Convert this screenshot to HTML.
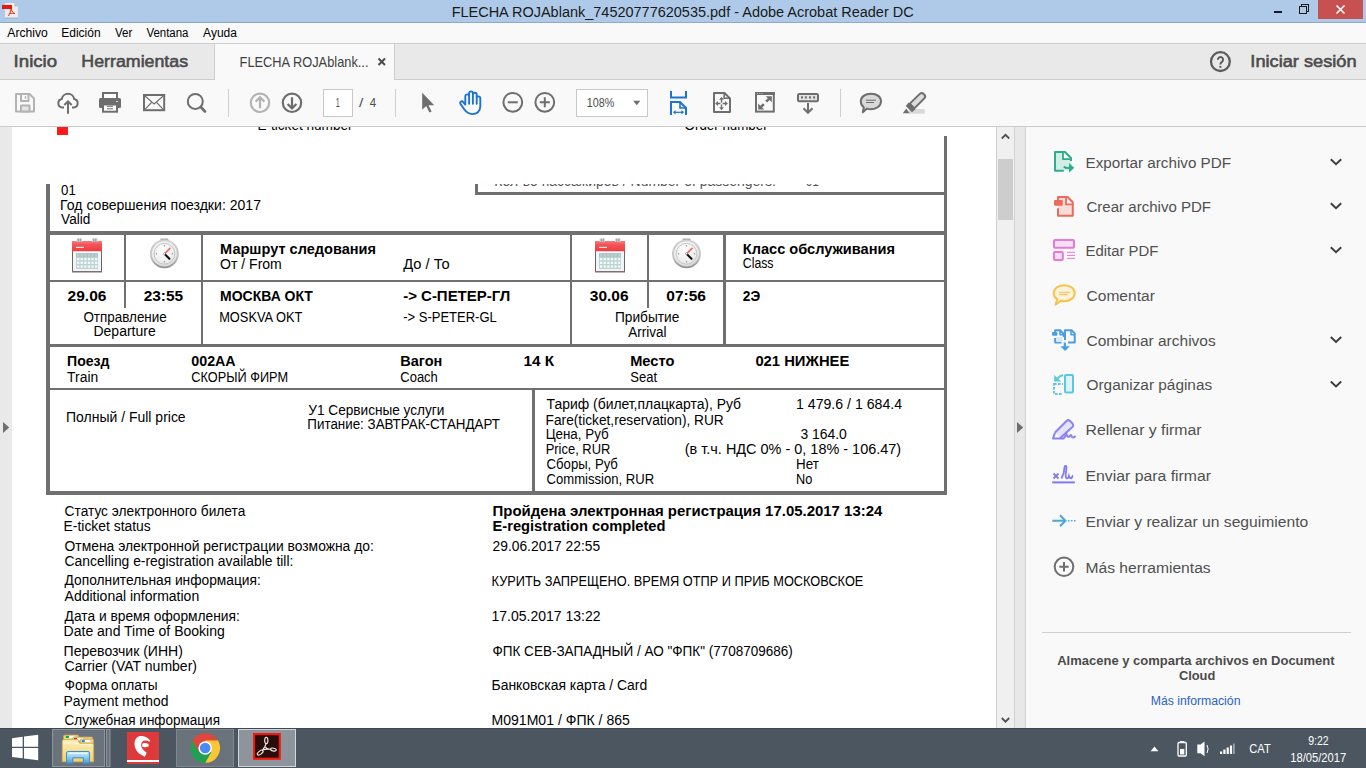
<!DOCTYPE html>
<html><head><meta charset="utf-8"><title>Acrobat Reader</title>
<style>
html,body{margin:0;padding:0;width:1366px;height:768px;overflow:hidden;background:#fff}
svg{display:block}
text{font-family:"Liberation Sans",sans-serif;white-space:pre}
</style></head><body>
<svg width="1366" height="768" viewBox="0 0 1366 768">
<defs><clipPath id="c0"><rect x="0" y="127" width="996" height="20"/></clipPath><clipPath id="c1"><rect x="480" y="184" width="400" height="8"/></clipPath></defs>
<rect x="0" y="0" width="1366" height="22" fill="#aecae8" shape-rendering="crispEdges"/>
<rect x="0" y="22" width="1366" height="1" fill="#8ea9c6" shape-rendering="crispEdges"/>
<rect x="0" y="23" width="1366" height="20" fill="#f9f9f9" shape-rendering="crispEdges"/>
<rect x="0" y="43" width="1366" height="1" fill="#cdcdcd" shape-rendering="crispEdges"/>
<rect x="0" y="44" width="1366" height="35" fill="#e9e9e9" shape-rendering="crispEdges"/>
<rect x="0" y="79" width="1366" height="1" fill="#cdcdcd" shape-rendering="crispEdges"/>
<rect x="215" y="44" width="179" height="36" fill="#f9f9f9" shape-rendering="crispEdges"/>
<rect x="214" y="44" width="1" height="35" fill="#cdcdcd" shape-rendering="crispEdges"/>
<rect x="394" y="44" width="1" height="35" fill="#cdcdcd" shape-rendering="crispEdges"/>
<rect x="0" y="80" width="1366" height="46" fill="#f9f9f9" shape-rendering="crispEdges"/>
<rect x="0" y="126" width="1366" height="1" fill="#cbcbcb" shape-rendering="crispEdges"/>
<rect x="0" y="127" width="996" height="601" fill="#ffffff" shape-rendering="crispEdges"/>
<rect x="0" y="127" width="12" height="601" fill="#e9e9e9" shape-rendering="crispEdges"/>
<rect x="996" y="127" width="1" height="601" fill="#cfcfcf" shape-rendering="crispEdges"/>
<rect x="997" y="127" width="17" height="601" fill="#f0f0f0" shape-rendering="crispEdges"/>
<rect x="998" y="159" width="15" height="61" fill="#cdcdcd" shape-rendering="crispEdges"/>
<rect x="1014" y="127" width="1" height="601" fill="#d2d2d2" shape-rendering="crispEdges"/>
<rect x="1015" y="127" width="10" height="601" fill="#e8e8e8" shape-rendering="crispEdges"/>
<rect x="1025" y="127" width="1" height="601" fill="#cfcfcf" shape-rendering="crispEdges"/>
<rect x="1026" y="127" width="340" height="601" fill="#f9f9f9" shape-rendering="crispEdges"/>
<rect x="1042" y="632" width="309" height="1" fill="#cfcfcf" shape-rendering="crispEdges"/>
<rect x="0" y="728" width="1366" height="40" fill="#4c5661" shape-rendering="crispEdges"/>
<rect x="0" y="728" width="1366" height="1" fill="#3f4852" shape-rendering="crispEdges"/>
<rect x="1318" y="0" width="45" height="19" fill="#c75050" shape-rendering="crispEdges"/>
<rect x="475" y="184" width="3" height="11" fill="#707070" shape-rendering="crispEdges"/>
<rect x="475" y="192" width="472" height="3" fill="#707070" shape-rendering="crispEdges"/>
<rect x="944" y="136" width="3" height="358" fill="#707070" shape-rendering="crispEdges"/>
<rect x="46" y="184" width="4" height="310" fill="#707070" shape-rendering="crispEdges"/>
<rect x="46" y="231" width="901" height="4" fill="#707070" shape-rendering="crispEdges"/>
<rect x="46" y="280" width="901" height="2" fill="#707070" shape-rendering="crispEdges"/>
<rect x="46" y="344" width="901" height="3" fill="#707070" shape-rendering="crispEdges"/>
<rect x="46" y="388" width="901" height="2" fill="#707070" shape-rendering="crispEdges"/>
<rect x="46" y="491" width="901" height="4" fill="#707070" shape-rendering="crispEdges"/>
<rect x="124" y="235" width="2" height="45" fill="#707070" shape-rendering="crispEdges"/>
<rect x="124" y="282" width="2" height="26" fill="#707070" shape-rendering="crispEdges"/>
<rect x="201" y="235" width="2" height="109" fill="#707070" shape-rendering="crispEdges"/>
<rect x="570" y="235" width="2" height="109" fill="#707070" shape-rendering="crispEdges"/>
<rect x="647" y="235" width="2" height="45" fill="#707070" shape-rendering="crispEdges"/>
<rect x="647" y="282" width="2" height="26" fill="#707070" shape-rendering="crispEdges"/>
<rect x="723" y="235" width="3" height="109" fill="#707070" shape-rendering="crispEdges"/>
<rect x="532" y="390" width="3" height="101" fill="#707070" shape-rendering="crispEdges"/>
<rect x="57" y="127" width="11" height="8" fill="#ff1a1a" shape-rendering="crispEdges"/>
<g><path d="M5,3 H14.5 L18,6.5 V18 H5 Z" fill="#ececec"/><path d="M14.5,3 L18,6.5 H14.5 Z" fill="#bdbdbd"/><rect x="5" y="17.6" width="13" height="1" fill="#9fb3c8"/><rect x="2" y="5" width="10" height="4" fill="#e8190c"/><path d="M8.5,16 C9.5,14 10.5,12 11,9 M11,9 C12,11.5 13,13 14.8,13.5 M9.5,13.8 C11,13.2 13,13 14.8,13.5" stroke="#e8190c" stroke-width="0.9" fill="none"/></g>
<rect x="1274" y="11" width="8" height="2" fill="#1a1a1a" shape-rendering="crispEdges"/>
<g fill="none" stroke="#1a1a1a" stroke-width="1.1" shape-rendering="crispEdges"><rect x="1299.5" y="6.5" width="7" height="7"/><path d="M1301.5,6.5 V4.5 H1308.5 V11.5 H1306.5"/></g>
<path d="M1336.5,5.5 L1344.5,13.5 M1344.5,5.5 L1336.5,13.5" stroke="#fff" stroke-width="1.6"/>
<path d="M378.5,58.5 L385,65 M385,58.5 L378.5,65" stroke="#4b4b4b" stroke-width="2"/>
<circle cx="1220.4" cy="61.6" r="9.4" fill="none" stroke="#5c5c5c" stroke-width="2.3"/>
<path d="M1217.9,59.8 A2.6,2.6 0 1 1 1221.9,61.9 C1220.8,62.6 1220.4,63.2 1220.4,64.6" fill="none" stroke="#5c5c5c" stroke-width="2"/>
<rect x="1219.4" y="65.9" width="2" height="1.9" fill="#5c5c5c"/>
<g fill="none" stroke="#b3b3b3" stroke-width="2" stroke-linejoin="round"><path d="M16,94 H29.5 L34,98.5 V111.6 H16 Z"/><rect x="21" y="94" width="7.5" height="7" /><rect x="21" y="105.5" width="8.5" height="6" fill="#e6e6e6"/></g><rect x="24.8" y="96" width="1.3" height="3" fill="#b3b3b3"/>
<g fill="none" stroke="#6e6e6e" stroke-width="2" stroke-linecap="butt"><path d="M64,107.5 H62.3 A4.3,4.3 0 0 1 61.8,99 A6.3,6.3 0 0 1 74.2,99 A4.3,4.3 0 0 1 73.7,107.5 H72"/><path d="M68,113.8 V101.5 M64.3,105 L68,101.3 L71.7,105" stroke-linejoin="miter"/></g>
<g><rect x="103" y="93" width="14" height="6" fill="#fff" stroke="#6e6e6e" stroke-width="2"/><rect x="99" y="98" width="22" height="10" rx="1.5" fill="#6e6e6e"/><rect x="116" y="101" width="2" height="1" fill="#ddd"/><rect x="103" y="104.5" width="14" height="7.2" fill="#fff" stroke="#6e6e6e" stroke-width="2"/><path d="M107,106.3 H113 M107,108.8 H113" stroke="#6e6e6e" stroke-width="1"/></g>
<g fill="none" stroke="#6e6e6e"><rect x="144" y="95" width="20.2" height="15.2" stroke-width="2"/><path d="M145,96 L154.1,104 L163.2,96 M145,109.3 L151.5,102.5 M163.2,109.3 L156.7,102.5" stroke-width="1.1"/></g>
<g fill="none" stroke="#6e6e6e"><circle cx="195.3" cy="101.4" r="7.5" stroke-width="2"/><path d="M200.8,107 L205,111.5" stroke-width="2.6" stroke-linecap="round"/></g>
<rect x="228" y="89" width="1" height="28" fill="#cfcfcf" shape-rendering="crispEdges"/>
<rect x="395" y="89" width="1" height="28" fill="#cfcfcf" shape-rendering="crispEdges"/>
<rect x="840" y="89" width="1" height="28" fill="#cfcfcf" shape-rendering="crispEdges"/>
<g fill="none" stroke-width="2.2"><circle cx="260" cy="102.8" r="9.2" stroke="#b3b3b3"/><path d="M260,108.3 V97.3 M255.6,101.6 L260,97.2 L264.4,101.6" stroke="#b3b3b3"/><circle cx="292" cy="102.8" r="9.2" stroke="#6e6e6e"/><path d="M292,97.3 V108.3 M287.6,104 L292,108.4 L296.4,104" stroke="#6e6e6e"/></g>
<rect x="323.5" y="89.5" width="29" height="27" fill="#fff" stroke="#c8c8c8" stroke-width="1"/>
<path d="M422.2,92.8 V109.8 L426.2,106 L429.4,112.5 L431.6,111.4 L428.5,105.2 L434.2,105.2 Z" fill="#6e6e6e"/>
<g fill="none" stroke="#1b73d3" stroke-width="1.9" stroke-linecap="round" stroke-linejoin="round"><path d="M465.3,104.5 V96.3 A1.9,1.9 0 0 1 469.1,96.3 V103.8 M469.1,95.8 V93.3 A1.9,1.9 0 0 1 472.9,93.3 V103.8 M472.9,95.5 V94.6 A1.9,1.9 0 0 1 476.7,94.6 V103.8 M476.7,98.2 A1.8,1.8 0 0 1 480.3,98.2 V106.5 C480.3,111.5 476.5,114.1 472.5,114.1 C468.5,114.1 466,112 463.8,108.8 L460.3,103.6 A1.7,1.7 0 0 1 462.6,101.4 L465.3,104.6"/></g>
<g fill="none" stroke="#6e6e6e" stroke-width="2"><circle cx="512.8" cy="102.3" r="9.4"/><path d="M507.8,102.3 H517.8"/><circle cx="544.8" cy="102.3" r="9.4"/><path d="M539.8,102.3 H549.8 M544.8,97.3 V107.3"/></g>
<rect x="576.5" y="89.5" width="71" height="27" fill="#fff" stroke="#c8c8c8" stroke-width="1"/>
<path d="M633.2,100.7 H640.3 L636.75,105.3 Z" fill="#6e6e6e"/>
<g fill="none" stroke="#1b73d3" stroke-width="2"><path d="M671,91 V97.5 H686 V91"/><path d="M671,115 V102 H680 L686,108 V115"/><path d="M680,102 V108 H686" stroke-width="1.6"/><path d="M674,112.3 H683" stroke-width="1.2"/></g><path d="M673,112.3 L675.5,110 V114.6Z M684,112.3 L681.5,110 V114.6Z" fill="#1b73d3"/>
<g fill="none" stroke="#6e6e6e"><path d="M714,112 V93 H724.5 L730,98.5 V112 Z" stroke-width="2" stroke-linejoin="round"/><path d="M724.2,93.5 V98.2 H729.5" stroke-width="1.6"/><path d="M721.5,99.4 V102.4 M721.5,104.6 V107.6 M717.8,103.5 H720.4 M722.6,103.5 H725.2" stroke-width="1.4"/></g><path d="M721.5,96.8 L719.1,99.7 H723.9Z M721.5,110.2 L719.1,107.3 H723.9Z M715.1,103.5 L718,101.1 V105.9Z M727.9,103.5 L725,101.1 V105.9Z" fill="#6e6e6e"/>
<g><rect x="756" y="93" width="17.8" height="18.6" fill="none" stroke="#6e6e6e" stroke-width="2"/><rect x="755" y="92" width="19.8" height="3" fill="#6e6e6e"/><rect x="757" y="93" width="1" height="1" fill="#bbb"/><rect x="759.2" y="93" width="1" height="1" fill="#bbb"/><rect x="761.4" y="93" width="1" height="1" fill="#bbb"/><path d="M765.8,96.2 H771.8 V102.2 L769.6,100 L767.1,102.5 L765.3,100.7 L767.8,98.2 Z M764.2,109.6 H758.2 V103.6 L760.4,105.8 L762.9,103.3 L764.7,105.1 L762.2,107.6 Z" fill="#6e6e6e"/></g>
<g><rect x="798" y="94" width="20" height="7.2" rx="1.2" fill="#e4e4e4" stroke="#6e6e6e" stroke-width="2"/><rect x="801" y="96.3" width="2" height="2.2" fill="#6e6e6e"/><rect x="804.9" y="96.3" width="2" height="2.2" fill="#6e6e6e"/><rect x="809" y="96.3" width="2" height="2.2" fill="#6e6e6e"/><rect x="813.1" y="96.3" width="2" height="2.2" fill="#6e6e6e"/><path d="M808,103 V113 M803.5,108.3 L808,112.8 L812.5,108.3" fill="none" stroke="#6e6e6e" stroke-width="2"/></g>
<g><path d="M871,93.7 C877,93.7 881,97 881,101.3 C881,106 876.5,109.3 871,109.3 C869.5,109.3 868,109 867,108.6 L862.8,112.2 L863.8,107.2 C861.5,105.6 860.8,103.5 860.8,101.5 C860.8,97 865,93.7 871,93.7 Z" fill="#d9d9d9" stroke="#6e6e6e" stroke-width="2" stroke-linejoin="round"/><path d="M866,100.2 H876 M866,102.5 H874" stroke="#6e6e6e" stroke-width="1"/></g>
<g><rect x="908.8" y="109.1" width="16" height="4.6" fill="#d9d9d9"/><path d="M909.8,103.6 L919.8,93.9 Q921.8,92.2 923.6,93.9 L924.4,94.7 Q926,96.6 924.3,98.4 L914.4,108.4 Z" fill="#dcdcdc" stroke="#6e6e6e" stroke-width="2" stroke-linejoin="round"/><path d="M908.6,102.6 L915.3,109.3 L912,112.3 L905.8,106.1 Z" fill="#6e6e6e"/><path d="M906.3,108.6 L902.8,113.3 H909.6 Z" fill="#6e6e6e"/></g>
<path d="M1001.8,138.5 L1005.5,134.8 L1009.2,138.5" fill="none" stroke="#505050" stroke-width="1.8"/>
<path d="M1001.8,718 L1005.5,721.7 L1009.2,718" fill="none" stroke="#505050" stroke-width="1.8"/>
<path d="M3,422 L9.2,427.5 L3,433 Z" fill="#6e6e6e"/>
<path d="M1017,422 L1023.2,427.5 L1017,433 Z" fill="#6e6e6e"/>
<g><path d="M1055,152 H1065 L1071,158 V170.7 H1055 Z" fill="#d4ece6"/><path d="M1063.8,170.7 H1055 V152 H1065 L1071,158 V161" fill="none" stroke="#2ead8c" stroke-width="2" stroke-linejoin="round"/><path d="M1063,152.5 V159.2 H1070.5" fill="#fff" stroke="#2ead8c" stroke-width="1.8"/><path d="M1063.8,166.5 Q1065.5,168.5 1069.5,168" fill="none" stroke="#2ead8c" stroke-width="2"/><path d="M1069,163 L1074.2,167.8 L1069,172.7Z" fill="#2ead8c"/></g>
<g><path d="M1058,197 H1067.6 L1073,202.5 V215.8 H1058 Z" fill="#f8dcd8"/><path d="M1058,200 V197 H1067.6 L1072.8,202.3 V215.8 H1058 V208.3" fill="none" stroke="#ec6a5c" stroke-width="2" stroke-linejoin="round"/><path d="M1066,197.5 V204.4 H1072.5" fill="#fff" stroke="#ec6a5c" stroke-width="1.8"/><rect x="1054" y="200" width="8.8" height="5.8" rx="1.2" fill="#ec6a5c"/></g>
<g stroke="#e877d9" fill="#f6e1f3"><rect x="1054" y="240" width="20" height="7.8" rx="1" stroke-width="2"/><rect x="1054" y="252.1" width="8.8" height="7.8" rx="1" stroke-width="2"/><path d="M1067,252.3 H1075 M1067,255.4 H1075 M1067,258.4 H1075" stroke-width="1"/></g>
<g><path d="M1064.2,285.2 C1070.5,285.2 1074.7,288.8 1074.7,293.2 C1074.7,297.7 1070.5,301.2 1064.2,301.2 C1063,301.2 1061.8,301 1060.8,300.7 L1055.5,304.7 L1057.3,299.3 C1055,297.8 1053.7,295.6 1053.7,293.2 C1053.7,288.8 1058,285.2 1064.2,285.2 Z" fill="#fbf1dc" stroke="#f6c34b" stroke-width="2" stroke-linejoin="round"/><path d="M1059,292.4 H1070 M1059,294.6 H1068" stroke="#f6c34b" stroke-width="1"/></g>
<g fill="none" stroke="#4a9de5" stroke-width="2" stroke-linejoin="round"><path d="M1055.2,332 V330.2 H1060 L1063.7,334 V337" /><path d="M1055.2,338 V342.6 H1061.5"/><path d="M1065,340 V330.2 H1071.5 L1074.7,333.5 V342.6 H1068"/><path d="M1060,330.5 V334.7 H1063.5 M1071,330.5 V334.7 H1074.5" stroke-width="1.6"/></g><rect x="1056.5" y="337" width="6" height="5" fill="#d9e8f6"/><rect x="1052" y="332.1" width="5.4" height="3.6" rx="1" fill="#4a9de5"/><path d="M1064.8,342.5 V347" stroke="#4a9de5" stroke-width="2.2"/><path d="M1060.3,346.3 H1069.9 L1065.1,351.1 Z" fill="#4a9de5"/>
<g><rect x="1065" y="375" width="8" height="17.6" rx="1" fill="#e0f3f8" stroke="#5ac8e0" stroke-width="2"/><path d="M1054,383 V394 H1063 M1054,384 H1063" fill="none" stroke="#5ac8e0" stroke-width="2" stroke-dasharray="2.6 1.4"/><path d="M1054.2,375 L1061.2,381.5 L1054.2,381.5 Z" fill="#5ac8e0"/><path d="M1057.5,378.5 Q1059.5,375.8 1063,375" fill="none" stroke="#5ac8e0" stroke-width="2"/></g>
<g><path d="M1055,432.5 L1066.5,421 A2.5,2.5 0 0 1 1070,421 L1072.4,423.4 A2.5,2.5 0 0 1 1072.4,427 L1060.3,438" fill="#e6e3fc" stroke="#8a82f4" stroke-width="2" stroke-linejoin="round"/><path d="M1055,432.5 L1053,438.5 H1063.5 C1065,437 1066,435.5 1066.5,434 C1067,436.5 1068.5,438 1070,436 C1070.5,434.5 1071,435 1072,437 C1073,438 1074.5,437.5 1075.5,435.8" fill="none" stroke="#8a82f4" stroke-width="2" stroke-linejoin="round"/></g>
<g fill="none" stroke="#7f79f3" stroke-width="1.8"><path d="M1053.5,473.5 L1058.5,478.5 M1058.5,473.5 L1053.5,478.5"/><path d="M1061.5,478.5 C1063,475.5 1064.5,470 1064.5,467.5 C1064.5,465.5 1066.5,465.5 1066.5,467.5 C1066.5,470 1065,475 1066,477.5 C1067,479 1068.5,478.5 1069,476 C1069.5,477.5 1070.5,479 1071.5,478 C1072.5,477 1072.5,476 1072,475.5"/><path d="M1052.2,482.4 H1074.8" stroke-width="2"/></g>
<g stroke="#4ba8d8" fill="none"><path d="M1052.3,520.8 H1065.5 M1060,515.3 L1065.5,520.8 L1060,526.3" stroke-width="2"/><path d="M1068,520.8 H1076.5" stroke-width="1.6" stroke-dasharray="1.5 1.5"/></g>
<g fill="none" stroke="#6e6e6e" stroke-width="2"><circle cx="1064" cy="566.8" r="9.3"/><path d="M1059.3,566.8 H1068.7 M1064,562.1 V571.5"/></g>
<path d="M1330.8,159.3 L1336,164.3 L1341.2,159.3" fill="none" stroke="#3c3c3c" stroke-width="1.9"/>
<path d="M1330.8,203.3 L1336,208.3 L1341.2,203.3" fill="none" stroke="#3c3c3c" stroke-width="1.9"/>
<path d="M1330.8,247.3 L1336,252.3 L1341.2,247.3" fill="none" stroke="#3c3c3c" stroke-width="1.9"/>
<path d="M1330.8,337 L1336,342 L1341.2,337" fill="none" stroke="#3c3c3c" stroke-width="1.9"/>
<path d="M1330.8,381.5 L1336,386.5 L1341.2,381.5" fill="none" stroke="#3c3c3c" stroke-width="1.9"/>
<defs><linearGradient id="calred" x1="0" y1="0" x2="0" y2="1"><stop offset="0" stop-color="#f77d80"/><stop offset="0.35" stop-color="#f25458"/><stop offset="1" stop-color="#ee3c40"/></linearGradient><linearGradient id="clkring" x1="0" y1="0" x2="0" y2="1"><stop offset="0" stop-color="#d0d0d0"/><stop offset="0.6" stop-color="#c4c4c4"/><stop offset="1" stop-color="#8d8d8d"/></linearGradient><radialGradient id="clkface" cx="0.45" cy="0.35" r="0.7"><stop offset="0" stop-color="#ffffff"/><stop offset="0.7" stop-color="#ececec"/><stop offset="1" stop-color="#d2d2d2"/></radialGradient></defs>
<g><rect x="72.5" y="241.5" width="29" height="30" fill="#eef7f7" stroke="#7a5f60" stroke-width="1"/><rect x="72" y="241" width="30" height="10.5" fill="url(#calred)"/><rect x="76" y="246.8" width="8" height="1.2" fill="#ffe0e0"/><rect x="73" y="251.5" width="28" height="1" fill="#ffffff"/><rect x="76" y="253.3" width="22" height="15.7" fill="#bcd3d3"/><rect x="76" y="253.3" width="22" height="3.8" fill="#a9c0c1"/><rect x="77.0" y="254.3" width="2.3" height="2.3" fill="#bfd3d4"/><rect x="80.6" y="254.3" width="2.3" height="2.3" fill="#bfd3d4"/><rect x="84.2" y="254.3" width="2.3" height="2.3" fill="#bfd3d4"/><rect x="87.8" y="254.3" width="2.3" height="2.3" fill="#bfd3d4"/><rect x="91.4" y="254.3" width="2.3" height="2.3" fill="#bfd3d4"/><rect x="95.0" y="254.3" width="2.3" height="2.3" fill="#bfd3d4"/><rect x="77.0" y="258.0" width="2.3" height="2.3" fill="#f4fafa"/><rect x="80.6" y="258.0" width="2.3" height="2.3" fill="#f4fafa"/><rect x="84.2" y="258.0" width="2.3" height="2.3" fill="#f4fafa"/><rect x="87.8" y="258.0" width="2.3" height="2.3" fill="#f4fafa"/><rect x="91.4" y="258.0" width="2.3" height="2.3" fill="#f4fafa"/><rect x="95.0" y="258.0" width="2.3" height="2.3" fill="#f4fafa"/><rect x="77.0" y="261.7" width="2.3" height="2.3" fill="#f4fafa"/><rect x="80.6" y="261.7" width="2.3" height="2.3" fill="#f4fafa"/><rect x="84.2" y="261.7" width="2.3" height="2.3" fill="#f4fafa"/><rect x="87.8" y="261.7" width="2.3" height="2.3" fill="#f4fafa"/><rect x="91.4" y="261.7" width="2.3" height="2.3" fill="#f4fafa"/><rect x="95.0" y="261.7" width="2.3" height="2.3" fill="#f4fafa"/><rect x="77.0" y="265.4" width="2.3" height="2.3" fill="#f4fafa"/><rect x="80.6" y="265.4" width="2.3" height="2.3" fill="#f4fafa"/><rect x="84.2" y="265.4" width="2.3" height="2.3" fill="#f4fafa"/><rect x="87.8" y="265.4" width="2.3" height="2.3" fill="#f4fafa"/><rect x="91.4" y="265.4" width="2.3" height="2.3" fill="#f4fafa"/><rect x="95.0" y="265.4" width="2.3" height="2.3" fill="#f4fafa"/><rect x="72" y="271" width="30" height="1.5" fill="#8a6a6a"/><rect x="76.5" y="238.5" width="5.5" height="3.5" fill="#d2d2d2"/><rect x="77.8" y="238.5" width="1" height="3.5" fill="#9a9a9a"/><rect x="79.8" y="238.5" width="1" height="3.5" fill="#9a9a9a"/><rect x="92" y="238.5" width="5.5" height="3.5" fill="#d2d2d2"/><rect x="93.3" y="238.5" width="1" height="3.5" fill="#9a9a9a"/><rect x="95.3" y="238.5" width="1" height="3.5" fill="#9a9a9a"/></g>
<g><rect x="160.4" y="238.60000000000002" width="8" height="2.6" rx="1" fill="#a9a9a9"/><circle cx="164.4" cy="253.8" r="14.4" fill="url(#clkring)"/><circle cx="164.4" cy="253.8" r="12.6" fill="url(#clkface)"/><circle cx="164.4" cy="253.8" r="10.4" fill="none" stroke="#c4c4c4" stroke-width="1"/><rect x="163.8" y="245.20000000000002" width="1.2" height="1.2" fill="#8c8c8c"/><rect x="171.8" y="253.20000000000002" width="1.2" height="1.2" fill="#8c8c8c"/><rect x="163.8" y="261.2" width="1.2" height="1.2" fill="#8c8c8c"/><rect x="155.8" y="253.20000000000002" width="1.2" height="1.2" fill="#8c8c8c"/><path d="M164.4,253.8 L169.9,248.3" stroke="#f06a6a" stroke-width="1.7" stroke-linecap="round"/><path d="M164.4,253.8 L169.4,258.8" stroke="#111" stroke-width="2.1" stroke-linecap="round"/><circle cx="164.4" cy="253.8" r="1" fill="#fff"/></g>
<g><rect x="595.5" y="241.5" width="29" height="30" fill="#eef7f7" stroke="#7a5f60" stroke-width="1"/><rect x="595" y="241" width="30" height="10.5" fill="url(#calred)"/><rect x="599" y="246.8" width="8" height="1.2" fill="#ffe0e0"/><rect x="596" y="251.5" width="28" height="1" fill="#ffffff"/><rect x="599" y="253.3" width="22" height="15.7" fill="#bcd3d3"/><rect x="599" y="253.3" width="22" height="3.8" fill="#a9c0c1"/><rect x="600.0" y="254.3" width="2.3" height="2.3" fill="#bfd3d4"/><rect x="603.6" y="254.3" width="2.3" height="2.3" fill="#bfd3d4"/><rect x="607.2" y="254.3" width="2.3" height="2.3" fill="#bfd3d4"/><rect x="610.8" y="254.3" width="2.3" height="2.3" fill="#bfd3d4"/><rect x="614.4" y="254.3" width="2.3" height="2.3" fill="#bfd3d4"/><rect x="618.0" y="254.3" width="2.3" height="2.3" fill="#bfd3d4"/><rect x="600.0" y="258.0" width="2.3" height="2.3" fill="#f4fafa"/><rect x="603.6" y="258.0" width="2.3" height="2.3" fill="#f4fafa"/><rect x="607.2" y="258.0" width="2.3" height="2.3" fill="#f4fafa"/><rect x="610.8" y="258.0" width="2.3" height="2.3" fill="#f4fafa"/><rect x="614.4" y="258.0" width="2.3" height="2.3" fill="#f4fafa"/><rect x="618.0" y="258.0" width="2.3" height="2.3" fill="#f4fafa"/><rect x="600.0" y="261.7" width="2.3" height="2.3" fill="#f4fafa"/><rect x="603.6" y="261.7" width="2.3" height="2.3" fill="#f4fafa"/><rect x="607.2" y="261.7" width="2.3" height="2.3" fill="#f4fafa"/><rect x="610.8" y="261.7" width="2.3" height="2.3" fill="#f4fafa"/><rect x="614.4" y="261.7" width="2.3" height="2.3" fill="#f4fafa"/><rect x="618.0" y="261.7" width="2.3" height="2.3" fill="#f4fafa"/><rect x="600.0" y="265.4" width="2.3" height="2.3" fill="#f4fafa"/><rect x="603.6" y="265.4" width="2.3" height="2.3" fill="#f4fafa"/><rect x="607.2" y="265.4" width="2.3" height="2.3" fill="#f4fafa"/><rect x="610.8" y="265.4" width="2.3" height="2.3" fill="#f4fafa"/><rect x="614.4" y="265.4" width="2.3" height="2.3" fill="#f4fafa"/><rect x="618.0" y="265.4" width="2.3" height="2.3" fill="#f4fafa"/><rect x="595" y="271" width="30" height="1.5" fill="#8a6a6a"/><rect x="599.5" y="238.5" width="5.5" height="3.5" fill="#d2d2d2"/><rect x="600.8" y="238.5" width="1" height="3.5" fill="#9a9a9a"/><rect x="602.8" y="238.5" width="1" height="3.5" fill="#9a9a9a"/><rect x="615" y="238.5" width="5.5" height="3.5" fill="#d2d2d2"/><rect x="616.3" y="238.5" width="1" height="3.5" fill="#9a9a9a"/><rect x="618.3" y="238.5" width="1" height="3.5" fill="#9a9a9a"/></g>
<g><rect x="682.5" y="238.60000000000002" width="8" height="2.6" rx="1" fill="#a9a9a9"/><circle cx="686.5" cy="253.8" r="14.4" fill="url(#clkring)"/><circle cx="686.5" cy="253.8" r="12.6" fill="url(#clkface)"/><circle cx="686.5" cy="253.8" r="10.4" fill="none" stroke="#c4c4c4" stroke-width="1"/><rect x="685.9" y="245.20000000000002" width="1.2" height="1.2" fill="#8c8c8c"/><rect x="693.9" y="253.20000000000002" width="1.2" height="1.2" fill="#8c8c8c"/><rect x="685.9" y="261.2" width="1.2" height="1.2" fill="#8c8c8c"/><rect x="677.9" y="253.20000000000002" width="1.2" height="1.2" fill="#8c8c8c"/><path d="M686.5,253.8 L692.0,248.3" stroke="#f06a6a" stroke-width="1.7" stroke-linecap="round"/><path d="M686.5,253.8 L691.5,258.8" stroke="#111" stroke-width="2.1" stroke-linecap="round"/><circle cx="686.5" cy="253.8" r="1" fill="#fff"/></g>
<path d="M12,738.3 L22.7,736.8 V746.7 H12 Z M24,736.6 L38.2,734.7 V746.7 H24 Z M12,748 H22.7 V758.2 L12,756.9 Z M24,748 H38.2 V760.3 L24,758.4 Z" fill="#ffffff"/>
<rect x="52.5" y="729.5" width="52" height="37" fill="#6a727b" stroke="#8e949b" stroke-width="1"/>
<rect x="106.5" y="729.5" width="3.5" height="37" fill="#6a727b" stroke="#8e949b" stroke-width="1"/>
<defs><linearGradient id="fold" x1="0" y1="0" x2="0" y2="1"><stop offset="0" stop-color="#fbf0bf"/><stop offset="1" stop-color="#f0d06a"/></linearGradient><linearGradient id="exb" x1="0" y1="0" x2="0" y2="1"><stop offset="0" stop-color="#d6f1fb"/><stop offset="0.5" stop-color="#8ccbef"/><stop offset="1" stop-color="#4b9bd8"/></linearGradient></defs>
<g><path d="M63.5,739.5 V736.5 Q63.5,735 65,735 H77.5 Q78.7,735 78.7,736.5 V739.5 Z" fill="#ecd48f" stroke="#caa54e" stroke-width="0.8"/><rect x="65.8" y="735.9" width="3.1" height="2.1" fill="#12b21f"/><rect x="69" y="735.9" width="6" height="2.1" fill="#fff"/><path d="M72.8,741.5 V738.3 Q72.8,737 74,737 H91.5 Q92.6,737 92.6,738.3 V741.5 Z" fill="#ecd48f" stroke="#caa54e" stroke-width="0.8"/><rect x="74" y="738" width="2.9" height="2" fill="#d6281c"/><rect x="77" y="738" width="6" height="2" fill="#fff"/><path d="M80.3,743.5 V740.3 Q80.3,739.1 81.5,739.1 H92.3 Q93.5,739.1 93.5,740.3 V743.5 Z" fill="#ecd48f" stroke="#caa54e" stroke-width="0.8"/><rect x="82" y="740.1" width="2.8" height="2" fill="#1789ea"/><rect x="84.9" y="740.1" width="5" height="2" fill="#fff"/><path d="M62.3,761.8 V741.5 Q62.3,739.6 64,739.6 H78 L79.5,743.2 H92 Q93.6,743.2 93.6,744.8 V761.8 Z" fill="url(#fold)" stroke="#d2b15a" stroke-width="0.9"/><path d="M63.6,743 H78.6 L80,744.8 H92.4" fill="none" stroke="#fff6d8" stroke-width="0.9"/><path d="M66.6,763.3 V753 Q66.6,751.5 68.2,751.5 H88 Q89.4,751.5 89.4,753 V763.3 H83.4 V757.8 H72.8 V763.3 Z" fill="url(#exb)" stroke="#3a8ccf" stroke-width="1"/><path d="M68.5,753.3 H87.5" stroke="#eefaff" stroke-width="0.9"/></g>
<g><rect x="127" y="732" width="32" height="32" fill="#de3a3c"/><rect x="127" y="760" width="32" height="2" fill="#fff"/><path d="M150.3,740.8 C147,736.5 141,734.5 137,737.5 C133,741 134,749 139,753.5 L144.6,756.7 C146,755 146.5,753.5 146.5,752.5 C142.5,750 140.5,746.5 141.3,743.5 C142,740 146.5,739.5 149.3,741.8 Z" fill="#fff"/><path d="M142.2,744 C143,742.8 146,742.8 148.6,744 V746.5 C146,747.5 143,747.5 142.2,746.5 Z" fill="#fff"/></g>
<rect x="176.5" y="729.5" width="57" height="37" fill="#6a727b" stroke="#7f868d" stroke-width="1"/>
<g><path d="M205.2,748 L192.38,740.6 A14.8,14.8 0 0 1 218.02,740.6 Z" fill="#e0463b"/><path d="M205.2,748 L218.02,740.6 A14.8,14.8 0 0 1 205.2,762.8 Z" fill="#fbc735"/><path d="M205.2,748 L205.2,762.8 A14.8,14.8 0 0 1 192.38,740.6 Z" fill="#22a052"/><path d="M205.2,740.6 H218.02 L211.6,751.7 Z" fill="#fbc735"/><path d="M211.6,751.7 L205.2,762.8 L198.8,751.7 Z" fill="#22a052"/><path d="M198.8,751.7 L192.38,740.6 L205.2,740.6 Z" fill="#e0463b"/><circle cx="205.2" cy="748" r="6.8" fill="#fff"/><circle cx="205.2" cy="748" r="5.3" fill="#4a8af4"/></g>
<rect x="238.5" y="729.5" width="57" height="37" fill="#8e949b" stroke="#d3d6d9" stroke-width="1"/>
<g><rect x="253" y="733" width="27.8" height="26.8" fill="#f0190b"/><rect x="255.1" y="735.2" width="23.6" height="22.4" fill="#2a0c0b"/><g fill="none" stroke="#f4f0f0" stroke-width="1.1"><ellipse cx="266.3" cy="740.4" rx="1.6" ry="3.1"/><ellipse cx="273.4" cy="749.6" rx="2.9" ry="1.4" transform="rotate(12 273.4 749.6)"/><ellipse cx="260.2" cy="752.6" rx="3.4" ry="1.6" transform="rotate(-38 260.2 752.6)"/><path d="M266.3,743.5 L264.8,746.6 L262.4,750.6 M264.8,746.6 L267.6,748.9 L270.6,749.2 M263.6,749.6 L267.6,748.9"/></g></g>
<path d="M1150.6,751.2 L1154.45,746.5 L1158.3,751.2 Z" fill="#fff"/>
<g><rect x="1178" y="742.5" width="8.3" height="13.5" rx="1" fill="none" stroke="#fff" stroke-width="1.3"/><rect x="1180" y="741" width="4.3" height="1.5" fill="#fff"/><rect x="1180" y="749" width="4.3" height="5.5" fill="#fff"/></g>
<g><path d="M1197.3,744.5 H1200.5 L1204.5,741.5 V756.3 L1200.5,753.2 H1197.3 Z" fill="#fff"/><path d="M1207,745 Q1209.2,749 1207,753" fill="none" stroke="#fff" stroke-width="1"/></g>
<g fill="#fff"><rect x="1220" y="751.5" width="2.2" height="2.5"/><rect x="1223.3" y="749.5" width="2.2" height="4.5"/><rect x="1226.6" y="747.5" width="2.2" height="6.5"/><rect x="1229.9" y="745.5" width="2.2" height="8.5"/><rect x="1233" y="743.5" width="1.8" height="10.5" fill="#9aa0a6"/></g>
<text x="451.67" y="16.80" font-size="15.5" fill="#1a1a1a" textLength="462.01" lengthAdjust="spacingAndGlyphs">FLECHA ROJAblank_74520777620535.pdf - Adobe Acrobat Reader DC</text>
<text x="7.30" y="36.60" font-size="12.5" textLength="40.55" lengthAdjust="spacingAndGlyphs">Archivo</text>
<text x="61.24" y="36.60" font-size="12.5" textLength="39.42" lengthAdjust="spacingAndGlyphs">Edición</text>
<text x="114.90" y="36.60" font-size="12.5" textLength="17.35" lengthAdjust="spacingAndGlyphs">Ver</text>
<text x="146.40" y="36.60" font-size="12.5" textLength="42.06" lengthAdjust="spacingAndGlyphs">Ventana</text>
<text x="203.10" y="36.60" font-size="12.5" textLength="33.85" lengthAdjust="spacingAndGlyphs">Ayuda</text>
<text x="13.64" y="67.00" font-size="16" fill="#4b4b4b" stroke="#4b4b4b" stroke-width="0.55" textLength="43.45" lengthAdjust="spacingAndGlyphs">Inicio</text>
<text x="81.39" y="67.00" font-size="16" fill="#4b4b4b" stroke="#4b4b4b" stroke-width="0.55" textLength="106.71" lengthAdjust="spacingAndGlyphs">Herramientas</text>
<text x="239.61" y="67.00" font-size="14.3" fill="#404040" textLength="128.86" lengthAdjust="spacingAndGlyphs">FLECHA ROJAblank...</text>
<text x="1250.36" y="67.00" font-size="16" fill="#4b4b4b" stroke="#4b4b4b" stroke-width="0.55" textLength="106.26" lengthAdjust="spacingAndGlyphs">Iniciar sesión</text>
<text x="335.80" y="107.10" font-size="12.5" fill="#4b4b4b" textLength="3.97" lengthAdjust="spacingAndGlyphs">1</text>
<text x="358.90" y="107.10" font-size="12.5" fill="#4b4b4b" textLength="4.34" lengthAdjust="spacingAndGlyphs">/</text>
<text x="369.70" y="107.10" font-size="12.5" fill="#4b4b4b" textLength="6.36" lengthAdjust="spacingAndGlyphs">4</text>
<text x="586.80" y="106.50" font-size="12.5" fill="#4b4b4b" textLength="27.50" lengthAdjust="spacingAndGlyphs">108%</text>
<text x="1085.52" y="167.80" font-size="15.5" fill="#505050" textLength="145.54" lengthAdjust="spacingAndGlyphs">Exportar archivo PDF</text>
<text x="1086.50" y="211.60" font-size="15.5" fill="#505050" textLength="124.55" lengthAdjust="spacingAndGlyphs">Crear archivo PDF</text>
<text x="1085.54" y="255.60" font-size="15.5" fill="#505050" textLength="72.81" lengthAdjust="spacingAndGlyphs">Editar PDF</text>
<text x="1086.50" y="300.90" font-size="15.5" fill="#505050" textLength="68.36" lengthAdjust="spacingAndGlyphs">Comentar</text>
<text x="1086.50" y="345.60" font-size="15.5" fill="#505050">Combinar archivos</text>
<text x="1086.50" y="389.80" font-size="15.5" fill="#505050" textLength="125.65" lengthAdjust="spacingAndGlyphs">Organizar páginas</text>
<text x="1085.48" y="434.70" font-size="15.5" fill="#505050" textLength="116.09" lengthAdjust="spacingAndGlyphs">Rellenar y firmar</text>
<text x="1085.48" y="481.00" font-size="15.5" fill="#505050" textLength="125.58" lengthAdjust="spacingAndGlyphs">Enviar para firmar</text>
<text x="1085.49" y="526.50" font-size="15.5" fill="#505050" textLength="222.74" lengthAdjust="spacingAndGlyphs">Enviar y realizar un seguimiento</text>
<text x="1085.49" y="572.90" font-size="15.5" fill="#505050" textLength="125.16" lengthAdjust="spacingAndGlyphs">Más herramientas</text>
<text x="1057.20" y="665.10" font-size="13" font-weight="bold" fill="#4b4b4b">Almacene y comparta archivos en Document</text>
<text x="1178.90" y="679.90" font-size="13" font-weight="bold" fill="#4b4b4b" textLength="36.44" lengthAdjust="spacingAndGlyphs">Cloud</text>
<text x="1150.72" y="705.00" font-size="12.5" fill="#2a62c2" textLength="89.73" lengthAdjust="spacingAndGlyphs">Más información</text>
<text x="1249.30" y="753.00" font-size="12" fill="#ffffff" textLength="21.38" lengthAdjust="spacingAndGlyphs">CAT</text>
<text x="1308.20" y="744.90" font-size="12" fill="#ffffff" textLength="20.41" lengthAdjust="spacingAndGlyphs">9:22</text>
<text x="1290.20" y="762.00" font-size="12" fill="#ffffff" textLength="56.00" lengthAdjust="spacingAndGlyphs">18/05/2017</text>
<text x="257.41" y="130.00" font-size="13.8" textLength="95.19" lengthAdjust="spacingAndGlyphs" clip-path="url(#c0)">E-ticket number</text>
<text x="684.60" y="130.00" font-size="13.8" textLength="83.01" lengthAdjust="spacingAndGlyphs" clip-path="url(#c0)">Order number</text>
<text x="494.39" y="186.20" font-size="13.8" fill="#555" textLength="281.46" lengthAdjust="spacingAndGlyphs" clip-path="url(#c1)">Кол-во пассажиров / Number of passengers:</text>
<text x="805.70" y="186.20" font-size="13.8" fill="#555" textLength="13.28" lengthAdjust="spacingAndGlyphs" clip-path="url(#c1)">01</text>
<text x="61.10" y="194.50" font-size="13.8" textLength="14.64" lengthAdjust="spacingAndGlyphs">01</text>
<text x="60.08" y="209.80" font-size="13.8" textLength="200.91" lengthAdjust="spacingAndGlyphs">Год совершения поездки: 2017</text>
<text x="61.10" y="223.80" font-size="13.8" textLength="29.16" lengthAdjust="spacingAndGlyphs">Valid</text>
<text x="220.10" y="254.30" font-size="13.8" font-weight="bold" textLength="155.85" lengthAdjust="spacingAndGlyphs">Маршрут следования</text>
<text x="220.10" y="269.10" font-size="13.8" textLength="61.70" lengthAdjust="spacingAndGlyphs">От / From</text>
<text x="403.20" y="269.30" font-size="13.8" textLength="46.45" lengthAdjust="spacingAndGlyphs">До / То</text>
<text x="742.80" y="253.80" font-size="13.8" font-weight="bold" textLength="152.15" lengthAdjust="spacingAndGlyphs">Класс обслуживания</text>
<text x="742.80" y="268.40" font-size="13.8" textLength="30.71" lengthAdjust="spacingAndGlyphs">Class</text>
<text x="67.60" y="301.10" font-size="13.8" font-weight="bold" textLength="38.83" lengthAdjust="spacingAndGlyphs">29.06</text>
<text x="143.70" y="301.10" font-size="13.8" font-weight="bold" textLength="39.43" lengthAdjust="spacingAndGlyphs">23:55</text>
<text x="83.40" y="321.60" font-size="13.8" textLength="83.38" lengthAdjust="spacingAndGlyphs">Отправление</text>
<text x="93.49" y="335.60" font-size="13.8" textLength="62.18" lengthAdjust="spacingAndGlyphs">Departure</text>
<text x="220.10" y="300.70" font-size="13.8" font-weight="bold" textLength="92.82" lengthAdjust="spacingAndGlyphs">МОСКВА ОКТ</text>
<text x="219.18" y="322.00" font-size="13.8" textLength="83.29" lengthAdjust="spacingAndGlyphs">MOSKVA OKT</text>
<text x="403.20" y="300.50" font-size="13.8" font-weight="bold" textLength="107.14" lengthAdjust="spacingAndGlyphs">-&gt; С-ПЕТЕР-ГЛ</text>
<text x="403.20" y="322.00" font-size="13.8" textLength="93.59" lengthAdjust="spacingAndGlyphs">-&gt; S-PETER-GL</text>
<text x="589.80" y="301.10" font-size="13.8" font-weight="bold" textLength="38.83" lengthAdjust="spacingAndGlyphs">30.06</text>
<text x="666.30" y="301.10" font-size="13.8" font-weight="bold" textLength="39.63" lengthAdjust="spacingAndGlyphs">07:56</text>
<text x="615.01" y="321.80" font-size="13.8" textLength="64.27" lengthAdjust="spacingAndGlyphs">Прибытие</text>
<text x="628.30" y="336.50" font-size="13.8" textLength="38.26" lengthAdjust="spacingAndGlyphs">Arrival</text>
<text x="742.80" y="300.90" font-size="13.8" font-weight="bold" textLength="17.42" lengthAdjust="spacingAndGlyphs">2Э</text>
<text x="67.10" y="366.00" font-size="13.8" font-weight="bold" textLength="42.45" lengthAdjust="spacingAndGlyphs">Поезд</text>
<text x="67.10" y="381.70" font-size="13.8" textLength="31.08" lengthAdjust="spacingAndGlyphs">Train</text>
<text x="191.30" y="365.90" font-size="13.8" font-weight="bold" textLength="44.36" lengthAdjust="spacingAndGlyphs">002AA</text>
<text x="191.30" y="381.90" font-size="13.8" textLength="96.76" lengthAdjust="spacingAndGlyphs">СКОРЫЙ ФИРМ</text>
<text x="400.30" y="365.90" font-size="13.8" font-weight="bold" textLength="42.05" lengthAdjust="spacingAndGlyphs">Вагон</text>
<text x="400.30" y="381.90" font-size="13.8" textLength="37.53" lengthAdjust="spacingAndGlyphs">Coach</text>
<text x="523.60" y="365.90" font-size="13.8" font-weight="bold" textLength="30.56" lengthAdjust="spacingAndGlyphs">14 К</text>
<text x="630.20" y="365.90" font-size="13.8" font-weight="bold" textLength="44.15" lengthAdjust="spacingAndGlyphs">Место</text>
<text x="630.20" y="381.90" font-size="13.8" textLength="26.84" lengthAdjust="spacingAndGlyphs">Seat</text>
<text x="755.40" y="365.90" font-size="13.8" font-weight="bold" textLength="93.92" lengthAdjust="spacingAndGlyphs">021 НИЖНЕЕ</text>
<text x="66.09" y="422.00" font-size="13.8" textLength="119.58" lengthAdjust="spacingAndGlyphs">Полный / Full price</text>
<text x="308.30" y="414.70" font-size="13.8" textLength="136.10" lengthAdjust="spacingAndGlyphs">У1 Сервисные услуги</text>
<text x="307.33" y="429.30" font-size="13.8" textLength="192.61" lengthAdjust="spacingAndGlyphs">Питание: ЗАВТРАК-СТАНДАРТ</text>
<text x="546.60" y="408.50" font-size="13.8" textLength="194.50" lengthAdjust="spacingAndGlyphs">Тариф (билет,плацкарта), Руб</text>
<text x="545.61" y="424.60" font-size="13.8" textLength="178.16" lengthAdjust="spacingAndGlyphs">Fare(ticket,reservation), RUR</text>
<text x="545.63" y="439.10" font-size="13.8" textLength="63.08" lengthAdjust="spacingAndGlyphs">Цена, Руб</text>
<text x="545.66" y="454.40" font-size="13.8" textLength="64.70" lengthAdjust="spacingAndGlyphs">Price, RUR</text>
<text x="546.60" y="468.90" font-size="13.8" textLength="71.31" lengthAdjust="spacingAndGlyphs">Сборы, Руб</text>
<text x="546.60" y="484.20" font-size="13.8" textLength="107.57" lengthAdjust="spacingAndGlyphs">Commission, RUR</text>
<text x="795.97" y="408.50" font-size="13.8" textLength="106.19" lengthAdjust="spacingAndGlyphs">1 479.6 / 1 684.4</text>
<text x="800.40" y="439.10" font-size="13.8" textLength="46.47" lengthAdjust="spacingAndGlyphs">3 164.0</text>
<text x="684.80" y="454.40" font-size="13.8" textLength="216.32" lengthAdjust="spacingAndGlyphs">(в т.ч. НДС 0% - 0, 18% - 106.47)</text>
<text x="796.03" y="468.90" font-size="13.8" textLength="22.81" lengthAdjust="spacingAndGlyphs">Нет</text>
<text x="796.07" y="484.20" font-size="13.8" textLength="16.32" lengthAdjust="spacingAndGlyphs">No</text>
<text x="64.60" y="515.90" font-size="13.8" textLength="180.67" lengthAdjust="spacingAndGlyphs">Статус электронного билета</text>
<text x="63.59" y="531.00" font-size="13.8" textLength="87.20" lengthAdjust="spacingAndGlyphs">E-ticket status</text>
<text x="64.60" y="551.00" font-size="13.8" textLength="309.24" lengthAdjust="spacingAndGlyphs">Отмена электронной регистрации возможна до:</text>
<text x="64.60" y="566.00" font-size="13.8" textLength="228.74" lengthAdjust="spacingAndGlyphs">Cancelling e-registration available till:</text>
<text x="64.60" y="585.10" font-size="13.8" textLength="196.23" lengthAdjust="spacingAndGlyphs">Дополнительная информация:</text>
<text x="64.60" y="600.90" font-size="13.8" textLength="134.58" lengthAdjust="spacingAndGlyphs">Additional information</text>
<text x="64.60" y="621.00" font-size="13.8" textLength="175.23" lengthAdjust="spacingAndGlyphs">Дата и время оформления:</text>
<text x="63.59" y="635.90" font-size="13.8" textLength="161.20" lengthAdjust="spacingAndGlyphs">Date and Time of Booking</text>
<text x="63.58" y="655.90" font-size="13.8" textLength="119.32" lengthAdjust="spacingAndGlyphs">Перевозчик (ИНН)</text>
<text x="64.60" y="670.50" font-size="13.8" textLength="132.40" lengthAdjust="spacingAndGlyphs">Carrier (VAT number)</text>
<text x="64.60" y="689.70" font-size="13.8" textLength="93.01" lengthAdjust="spacingAndGlyphs">Форма оплаты</text>
<text x="63.60" y="706.00" font-size="13.8" textLength="104.78" lengthAdjust="spacingAndGlyphs">Payment method</text>
<text x="64.60" y="724.80" font-size="13.8" textLength="155.36" lengthAdjust="spacingAndGlyphs">Служебная информация</text>
<text x="492.50" y="516.00" font-size="13.8" font-weight="bold" textLength="389.85" lengthAdjust="spacingAndGlyphs">Пройдена электронная регистрация 17.05.2017 13:24</text>
<text x="492.50" y="531.00" font-size="13.8" font-weight="bold" textLength="172.96" lengthAdjust="spacingAndGlyphs">E-registration completed</text>
<text x="492.50" y="550.50" font-size="13.8" textLength="107.67" lengthAdjust="spacingAndGlyphs">29.06.2017 22:55</text>
<text x="491.57" y="585.60" font-size="13.8" textLength="371.81" lengthAdjust="spacingAndGlyphs">КУРИТЬ ЗАПРЕЩЕНО. ВРЕМЯ ОТПР И ПРИБ МОСКОВСКОЕ</text>
<text x="491.49" y="621.10" font-size="13.8" textLength="109.00" lengthAdjust="spacingAndGlyphs">17.05.2017 13:22</text>
<text x="492.50" y="656.20" font-size="13.8" textLength="300.38" lengthAdjust="spacingAndGlyphs">ФПК СЕВ-ЗАПАДНЫЙ / АО &quot;ФПК&quot; (7708709686)</text>
<text x="491.49" y="690.20" font-size="13.8" textLength="155.79" lengthAdjust="spacingAndGlyphs">Банковская карта / Card</text>
<text x="491.48" y="724.80" font-size="13.8" textLength="138.39" lengthAdjust="spacingAndGlyphs">М091М01 / ФПК / 865</text>

</svg>
</body></html>
